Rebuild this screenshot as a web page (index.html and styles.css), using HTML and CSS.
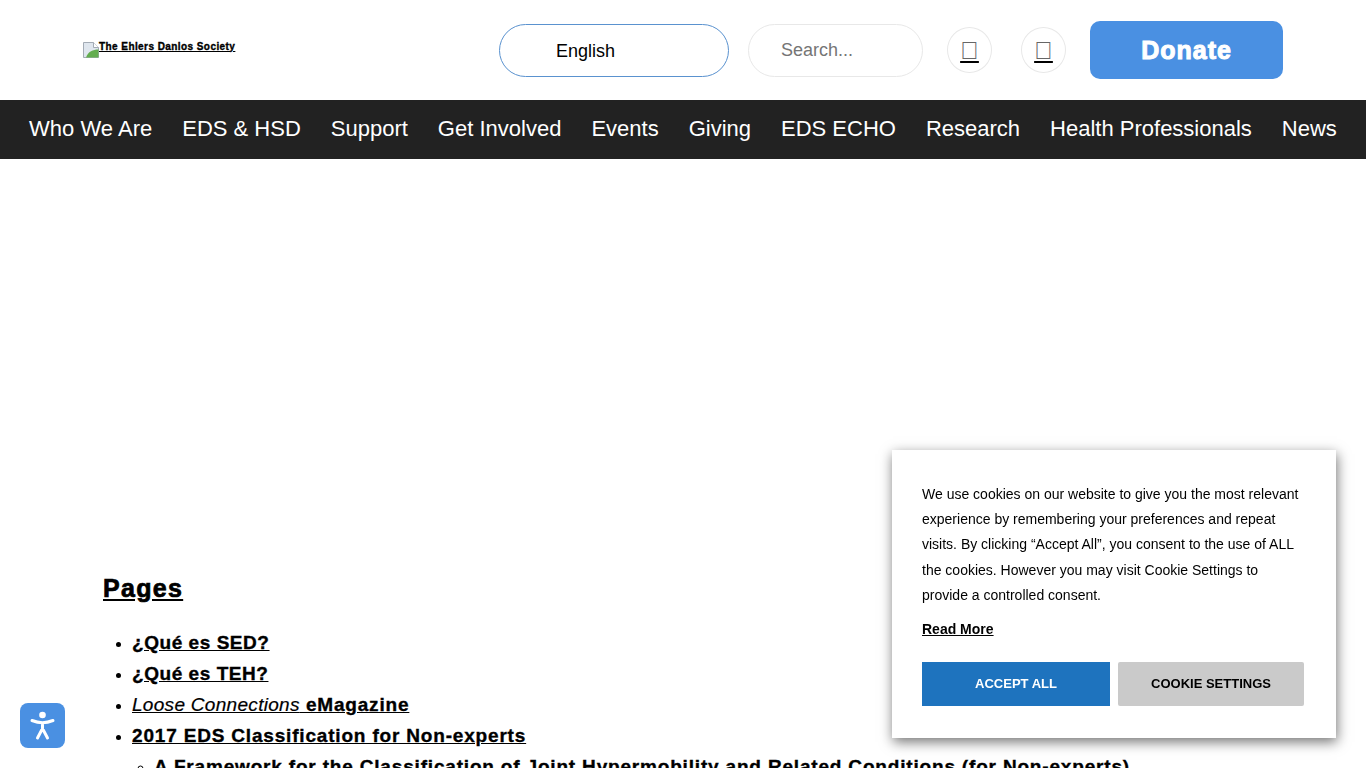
FILE: index.html
```html
<!DOCTYPE html>
<html lang="en">
<head>
<meta charset="utf-8">
<title>The Ehlers Danlos Society</title>
<link rel="stylesheet" href="styles.css">
</head>
<body>
<header class="top">
  <a class="logo" href="#">
    <svg class="broken" width="16" height="16" viewBox="0 0 16 16"><path d="M.5.5h10l5 5v10H.5z" fill="#dfe6ee" stroke="#a3abb5"/><path d="M3 15.500c2-6 7-8 12.500-8v8z" fill="#63ad4f"/><path d="M10.500.5v5h5" fill="#fff" stroke="#a3abb5"/></svg><span class="logo-alt">The Ehlers Danlos Society</span>
  </a>
  <div class="lang">English</div>
  <div class="search">Search...</div>
  <a class="round" href="#">&#xf007;</a>
  <a class="round" href="#">&#xf07a;</a>
  <a class="donate" href="#">Donate</a>
</header>
<nav class="menu">
  <a href="#">Who We Are</a>
  <a href="#">EDS &amp; HSD</a>
  <a href="#">Support</a>
  <a href="#">Get Involved</a>
  <a href="#">Events</a>
  <a href="#">Giving</a>
  <a href="#">EDS ECHO</a>
  <a href="#">Research</a>
  <a href="#">Health Professionals</a>
  <a href="#">News</a>
</nav>
<main class="content">
  <h2 class="pages"><a href="#">Pages</a></h2>
  <ul class="list">
    <li class="short"><a href="#">¿Qué es SED?</a></li>
    <li class="short"><a href="#">¿Qué es TEH?</a></li>
    <li><a href="#"><em>Loose Connections</em> eMagazine</a></li>
    <li><a href="#">2017 EDS Classification for Non-experts</a>
      <ul class="sub">
        <li><a href="#">A Framework for the Classification of Joint Hypermobility and Related Conditions (for Non-experts)</a></li>
      </ul>
    </li>
  </ul>
</main>
<aside class="cookie">
  <p class="cookie-text">We use cookies on our website to give you the most relevant experience by remembering your preferences and repeat visits. By clicking “Accept All”, you consent to the use of ALL the cookies. However you may visit Cookie Settings to provide a controlled consent.</p>
  <a class="more" href="#">Read More</a>
  <div class="cookie-btns">
    <a class="btn accept" href="#">ACCEPT ALL</a>
    <a class="btn settings" href="#">COOKIE SETTINGS</a>
  </div>
</aside>
<button class="a11y" aria-label="Accessibility">
  <svg width="27" height="32" viewBox="0 0 27 32"><circle cx="13.500" cy="5" r="3.300" fill="#fff"/><path d="M3 10.500c4 1.600 7 2.200 10.500 2.200S20 12.100 24 10.500M13.500 13v6M13.500 18.500L8.500 28M13.500 18.500l5 9.500" fill="none" stroke="#fff" stroke-width="3" stroke-linecap="round"/></svg>
</button>
</body>
</html>
```
FILE: styles.css
```css
* { box-sizing: border-box; }
html, body { margin: 0; height: 100%; overflow: hidden; background: #fff; }
body { font-family: "Liberation Sans", Arial, sans-serif; color: #000; }
a { color: inherit; }

.top { height: 100px; display: flex; align-items: center; padding: 0 83px; }
.logo { display: flex; align-items: flex-start; margin-right: auto; margin-top: -1px; font-size: 10px; font-weight: 900; letter-spacing: .43px; -webkit-text-stroke: .35px #000; }
.broken { flex: none; }
.logo-alt { margin-top: -1px; }
.lang { width: 230px; height: 53px; margin-top: 1px; border: 1px solid #5a92cf; border-radius: 27px; padding: 2px 0 0 56px; display: flex; align-items: center; font-size: 18px; }
.search { width: 175px; height: 53px; margin: 1px 24px 0 19px; border: 1px solid #e8e8e8; border-radius: 27px; padding-left: 32px; display: flex; align-items: center; font-size: 18px; color: #757575; }
.round { width: 45px; height: 46px; border: 1px solid #e8e8e8; border-radius: 50%; display: flex; align-items: center; justify-content: center; font-size: 25px; color: #666; text-decoration-color: #000; margin-right: 29px; }
.round + .round { margin-right: 24px; }
.donate { width: 193px; height: 58px; background: #4a90e2; border-radius: 10px; color: #fff; display: flex; align-items: center; justify-content: center; padding-top: 1px; font-size: 25px; font-weight: 900; letter-spacing: 1px; -webkit-text-stroke: 1px #fff; text-decoration: none; }

.menu { height: 59px; padding-bottom: 2px; background: #222; display: flex; align-items: center; justify-content: center; gap: 30px; }
.menu a { color: #fff; font-size: 22px; text-decoration: none; white-space: nowrap; }

.content { padding: 414px 0 0 103px; }
.pages { margin: 0 0 24px; font-size: 25px; line-height: 30px; font-weight: 900; letter-spacing: 1.300px; -webkit-text-stroke: .7px #000; }
.list { margin: 0; padding-left: 29px; font-size: 19px; line-height: 31px; font-weight: 700; letter-spacing: .82px; -webkit-text-stroke: .35px #000; }
.list li::marker { font-size: 16px; }
.list .short { letter-spacing: .55px; }
.list em { font-weight: 400; letter-spacing: .3px; -webkit-text-stroke: .2px #000; }
.sub { margin: 0; padding-left: 22px; }
.sub li { white-space: nowrap; }

.cookie { position: fixed; left: 892px; top: 450px; width: 444px; height: 288px; background: #fff; padding: 31.800px 30px 0; box-shadow: 1px 4px 12px rgba(0,0,0,.55); }
.cookie-text { margin: 0 0 8.800px; font-size: 14px; line-height: 25.300px; }
.more { display: block; font-size: 14px; font-weight: 700; line-height: 25px; }
.cookie-btns { display: flex; gap: 8px; margin-top: 20px; }
.btn { height: 44px; padding-bottom: 2px; display: flex; align-items: center; justify-content: center; font-size: 13px; font-weight: 700; text-decoration: none; }
.accept { width: 188px; background: #1e73be; color: #fff; }
.settings { width: 186px; background: #cacaca; color: #000; border-radius: 2px; }

.a11y { position: fixed; left: 20px; top: 703px; width: 45px; height: 45px; border: 0; padding: 0; border-radius: 8px; background: #4a90e2; display: flex; align-items: center; justify-content: center; }
```
